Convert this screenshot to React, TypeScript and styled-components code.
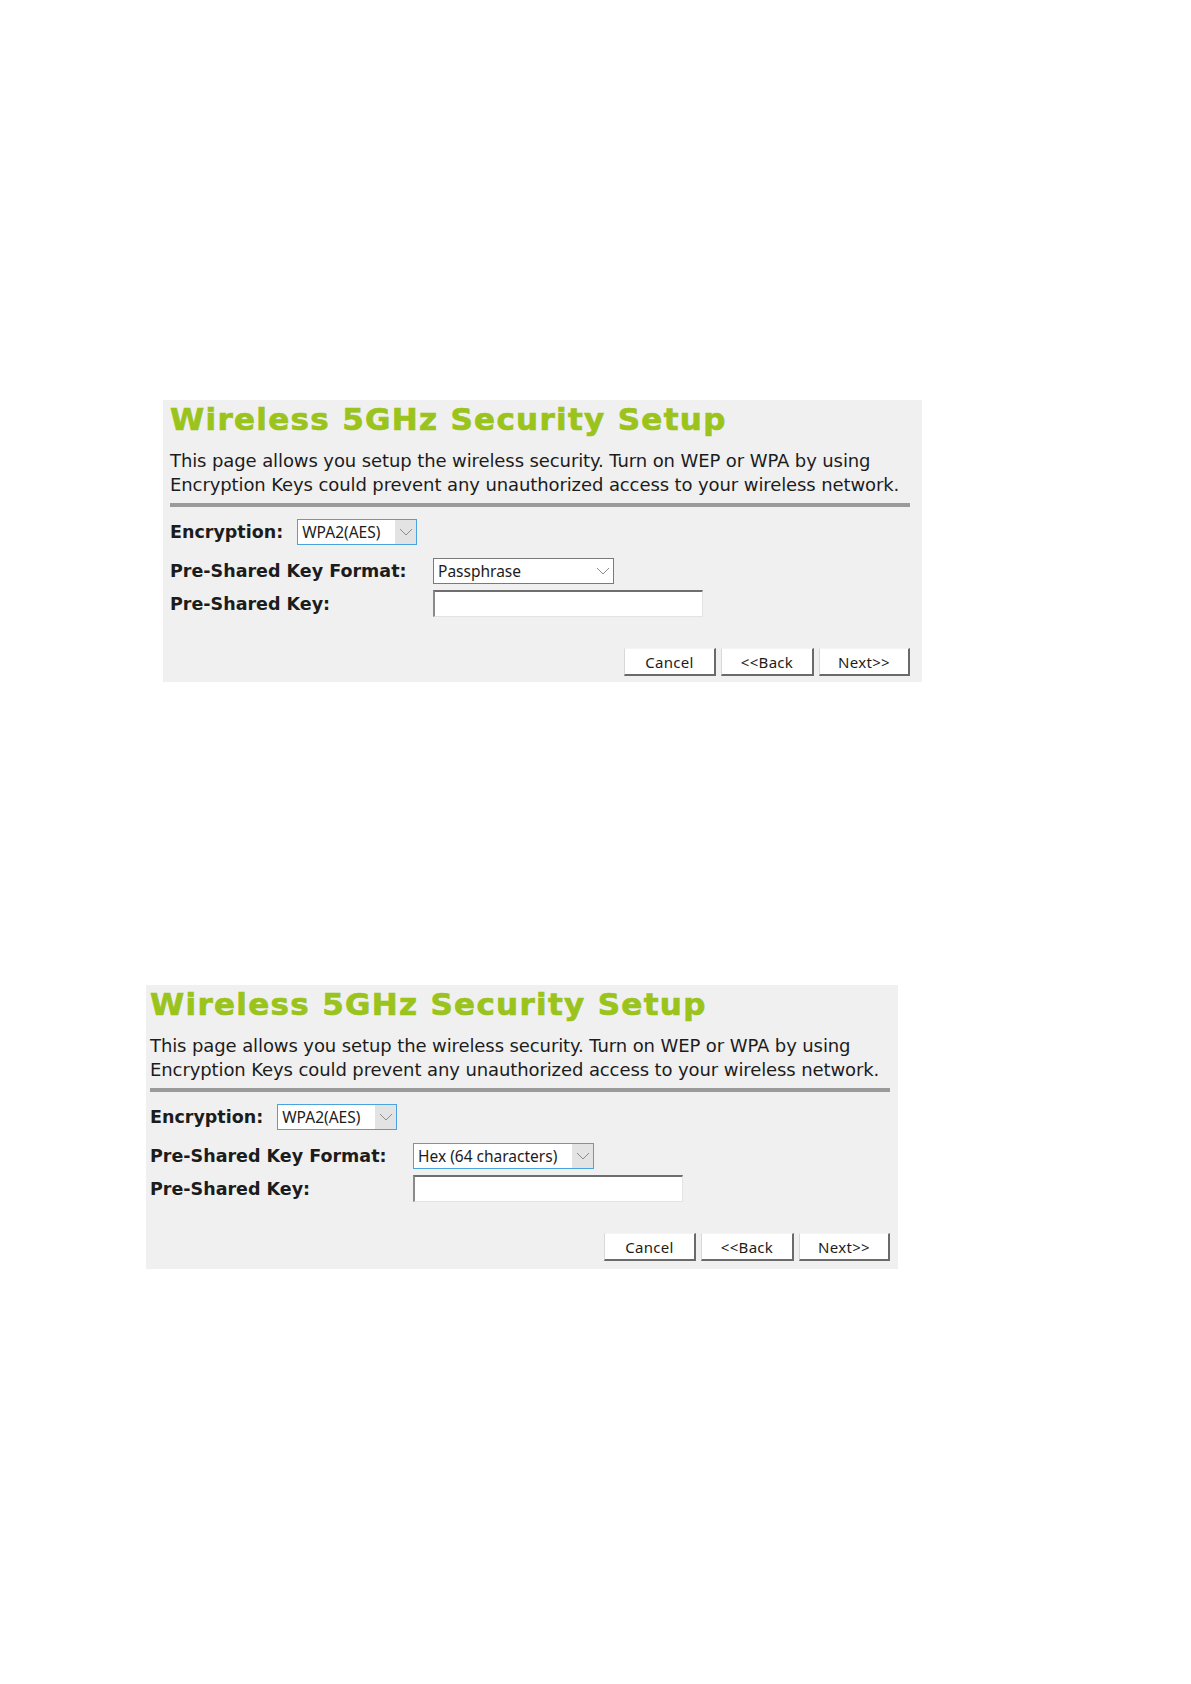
import styled, { createGlobalStyle } from "styled-components";

const GlobalStyle = createGlobalStyle`
  html, body {
    margin: 0;
    padding: 0;
    background: #ffffff;
  }
  body {
    font-family: "DejaVu Sans", Verdana, sans-serif;
    color: #1c1c1c;
  }
`;

const Page = styled.main`
  width: 1191px;
  height: 1684px;
  display: flex;
  flex-direction: column;
  padding-top: 400px;
  box-sizing: border-box;
`;

type PanelBox = {
  $left: number;
  $padLeft: number;
  $padRight: number;
  $padBottom: number;
  $gapAfter: number;
};

const Panel = styled.section<PanelBox>`
  margin-left: ${(p) => p.$left}px;
  margin-bottom: ${(p) => p.$gapAfter}px;
  align-self: flex-start;
  background: #f0f0f0;
  padding: 0 ${(p) => p.$padRight}px ${(p) => p.$padBottom}px ${(p) => p.$padLeft}px;
  width: 740px;
`;

const Title = styled.h1`
  margin: 0;
  padding-top: 1px;
  font-family: "DejaVu Sans", Verdana, sans-serif;
  font-weight: bold;
  font-size: 31px;
  line-height: 36px;
  color: #9ac31c;
  letter-spacing: 1.3px;
  -webkit-text-stroke: 0.7px #9ac31c;
`;

const Intro = styled.p`
  margin: 12px 0 0;
  font-size: 18px;
  line-height: 24px;
  letter-spacing: -0.1px;
`;

const Divider = styled.hr`
  margin: 6px 0 0;
  border: 0;
  height: 4px;
  background: #9a9a9a;
`;

const InlineRow = styled.div`
  display: flex;
  align-items: center;
  gap: 14px;
  margin-top: 12px;
  height: 26px;
`;

const FieldGrid = styled.div`
  display: grid;
  grid-template-columns: 263px auto;
  row-gap: 6px;
  margin-top: 13px;
  align-items: center;
`;

const Label = styled.label`
  font-weight: bold;
  font-size: 17.5px;
  line-height: 22px;
`;

const Select = styled.div<{ $width: number; $focused: boolean }>`
  width: ${(p) => p.$width}px;
  height: 26px;
  box-sizing: border-box;
  display: flex;
  align-items: stretch;
  background: #ffffff;
  border: 1px solid ${(p) => (p.$focused ? "#4aa3df" : "#7a7a7a")};
  font-family: "Noto Sans", "Open Sans", sans-serif;
  font-size: 15.5px;
  color: #1c1c1c;
`;

const SelectText = styled.span`
  flex: 1;
  padding-left: 4px;
  display: flex;
  align-items: center;
  white-space: nowrap;
  overflow: hidden;
`;

const SelectArrow = styled.span<{ $focused: boolean }>`
  width: 21px;
  flex: none;
  display: flex;
  align-items: center;
  justify-content: center;
  background: ${(p) => (p.$focused ? "#e3e3e3" : "#ffffff")};
`;

const TextInput = styled.div`
  width: 270px;
  height: 27px;
  box-sizing: border-box;
  background: #ffffff;
  border-top: 2px solid #6e6e6e;
  border-left: 2px solid #8a8a8a;
  border-right: 1px solid #e3e3e3;
  border-bottom: 1px solid #e3e3e3;
`;

const ButtonBar = styled.div`
  display: flex;
  justify-content: flex-end;
  gap: 5px;
  margin-top: 31px;
`;

const Button = styled.button<{ $width: number }>`
  width: ${(p) => p.$width}px;
  height: 28px;
  box-sizing: border-box;
  background: #ffffff;
  border-top: 1px solid #f4f4f4;
  border-left: 1px solid #d8d8d8;
  border-right: 2px solid #6a6a6a;
  border-bottom: 2px solid #6a6a6a;
  font-family: "Noto Sans", "Open Sans", sans-serif;
  font-size: 15px;
  letter-spacing: 0.3px;
  color: #1c1c1c;
  padding: 1px 0 0;
`;

const Chevron = () => (
  <svg width="14" height="8" viewBox="0 0 14 8">
    <path d="M1 1 L7 7 L13 1" fill="none" stroke="#8c8c8c" strokeWidth="1" />
  </svg>
);

type DropProps = { value: string; width: number; focused: boolean };

const Dropdown = ({ value, width, focused }: DropProps) => (
  <Select $width={width} $focused={focused}>
    <SelectText>{value}</SelectText>
    <SelectArrow $focused={focused}>
      <Chevron />
    </SelectArrow>
  </Select>
);

type SetupProps = {
  left: number;
  padLeft: number;
  padRight: number;
  padBottom: number;
  gapAfter: number;
  format: string;
  formatFocused: boolean;
};

const SecuritySetup = ({
  left,
  padLeft,
  padRight,
  padBottom,
  gapAfter,
  format,
  formatFocused,
}: SetupProps) => (
  <Panel
    $left={left}
    $padLeft={padLeft}
    $padRight={padRight}
    $padBottom={padBottom}
    $gapAfter={gapAfter}
  >
    <Title>Wireless 5GHz Security Setup</Title>
    <Intro>
      This page allows you setup the wireless security. Turn on WEP or WPA by using
      <br />
      Encryption Keys could prevent any unauthorized access to your wireless network.
    </Intro>
    <Divider />
    <InlineRow>
      <Label>Encryption:</Label>
      <Dropdown value="WPA2(AES)" width={120} focused />
    </InlineRow>
    <FieldGrid>
      <Label>Pre-Shared Key Format:</Label>
      <Dropdown value={format} width={181} focused={formatFocused} />
      <Label>Pre-Shared Key:</Label>
      <TextInput />
    </FieldGrid>
    <ButtonBar>
      <Button $width={92}>Cancel</Button>
      <Button $width={93}>&lt;&lt;Back</Button>
      <Button $width={91}>Next&gt;&gt;</Button>
    </ButtonBar>
  </Panel>
);

const App = () => (
  <Page>
    <GlobalStyle />
    <SecuritySetup
      left={163}
      padLeft={7}
      padRight={12}
      padBottom={6}
      gapAfter={303}
      format="Passphrase"
      formatFocused={false}
    />
    <SecuritySetup
      left={146}
      padLeft={4}
      padRight={8}
      padBottom={8}
      gapAfter={0}
      format="Hex (64 characters)"
      formatFocused
    />
  </Page>
);

export default App;
